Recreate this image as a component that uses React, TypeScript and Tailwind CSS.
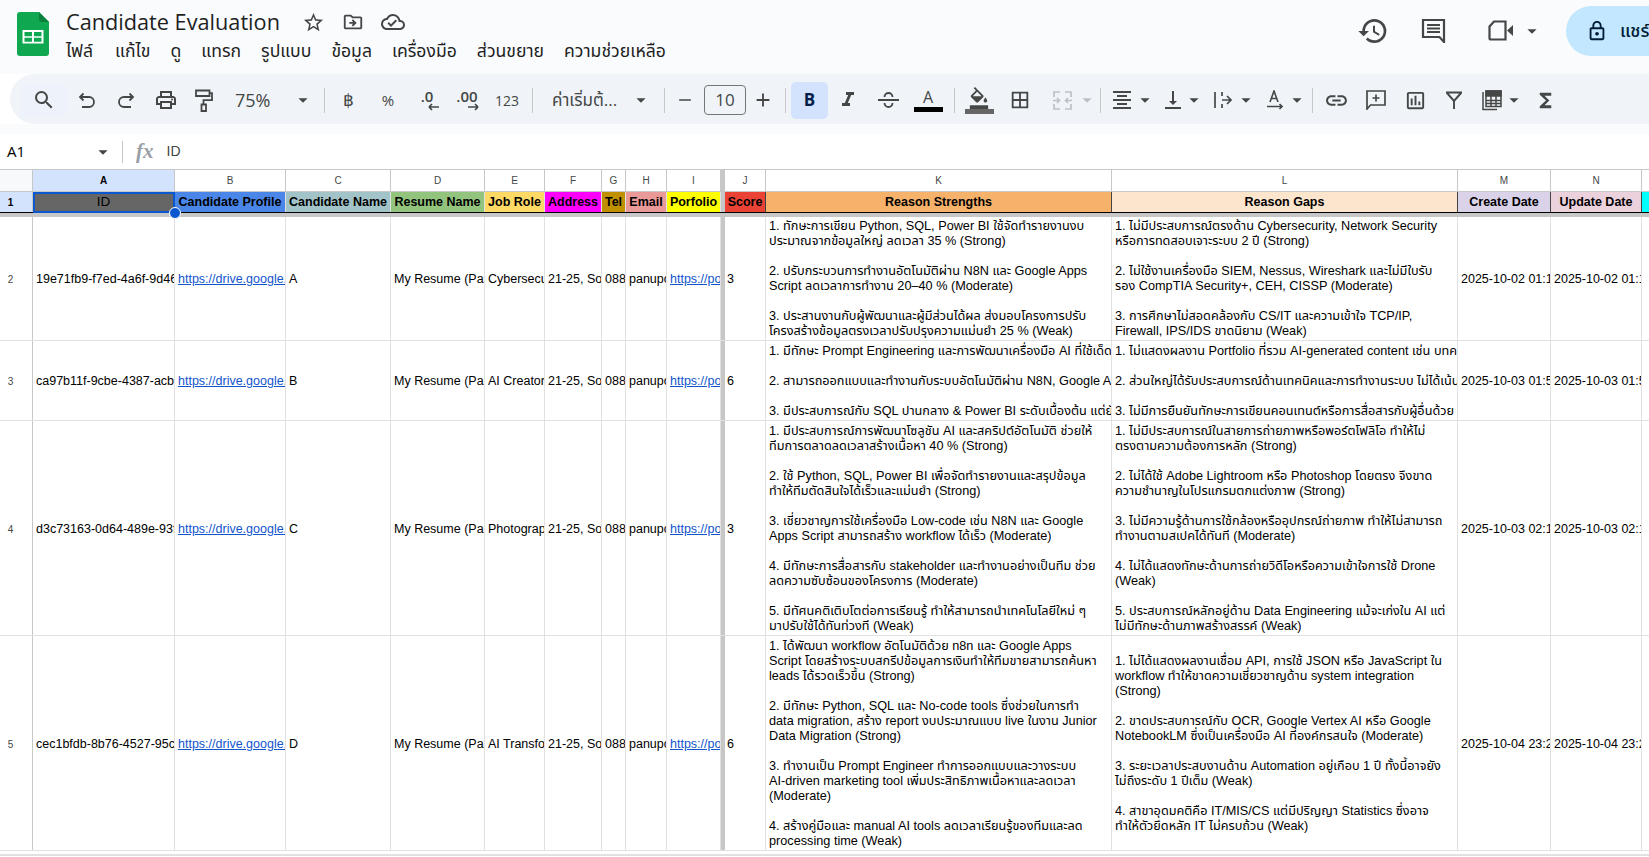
import React from "react";
import {
  MdSearch, MdOutlinePrint, MdArrowDropDown, MdRemove, MdAdd,
  MdFormatItalic, MdOutlineFormatColorFill, MdBorderAll, MdFormatAlignCenter,
  MdVerticalAlignBottom, MdLink, MdOutlineInsertChart,
  MdFunctions, MdStarBorder, MdOutlineDriveFileMove, MdOutlineCloudDone, MdHistory,
  MdOutlineLock,
} from "react-icons/md";

const font = "font-['Liberation_Sans','Noto_Sans_Thai','Noto_Sans',sans-serif]";
const ic = "text-[#444746]";

function Sep() {
  return <div className="w-px h-[25px] bg-[#c7c7c7] shrink-0" />;
}

function Arrow({ className = "" }: { className?: string }) {
  return <MdArrowDropDown size={22} className={`shrink-0 ${ic} ${className}`} />;
}

function Btn({ w, children, className = "" }: { w: string; children?: React.ReactNode; className?: string }) {
  return <div className={`${w} shrink-0 flex items-center justify-center ${className}`}>{children}</div>;
}

function Logo() {
  return (
    <svg width="32" height="44" viewBox="0 0 32 44" className="shrink-0">
      <path d="M3 0h19l10 10v31a3 3 0 0 1-3 3H3a3 3 0 0 1-3-3V3a3 3 0 0 1 3-3z" fill="#0fa850" />
      <path d="M22 0l10 10h-7a3 3 0 0 1-3-3z" fill="#0b7f3c" />
      <path d="M5.500 18h21v13.500h-21z" fill="#fff" />
      <path d="M7.500 20h7.500v4.200H7.500zM17 20h7.500v4.200H17zM7.500 25.700h7.500v4H7.500zM17 25.700h7.500v4H17z" fill="#0fa850" />
    </svg>
  );
}

function Decimal({ label, dir }: { label: string; dir: "l" | "r" }) {
  return (
    <div className="flex flex-col items-center leading-none text-[#444746]">
      <span className="text-[15px] font-semibold leading-[13px] font-['Open_Sans',sans-serif]">{label}</span>
      <svg width="11" height="8" viewBox="0 0 11 8" className={dir === "l" ? "ml-3" : "ml-3 rotate-180"}>
        <path d="M1 4h10M1 4l3-3M1 4l3 3" stroke="#444746" strokeWidth="1.700" fill="none" />
      </svg>
    </div>
  );
}

function Undo({ flip = false }: { flip?: boolean }) {
  return (
    <svg width="17" height="17" viewBox="0 0 17 17" fill="none" stroke="#444746" strokeWidth="1.800" className={flip ? "-scale-x-100" : ""}>
      <path d="M5.500 1.500L2 5l3.500 3.500M2 5h9a4.500 4.500 0 0 1 0 10H4" />
    </svg>
  );
}

function Paint() {
  return (
    <svg width="18" height="23" viewBox="0 0 18 23" fill="none" stroke="#444746" strokeWidth="1.800">
      <path d="M1 1.500h13.500v5.500H1zM14.500 4.200H17v7H8.500v4" />
      <path d="M6.500 15.500h4.500v6.500H6.500z" />
    </svg>
  );
}

function Strike() {
  return (
    <svg width="21" height="20" viewBox="0 0 21 20" fill="none" stroke="#444746" strokeWidth="1.800">
      <path d="M0 10h21M6.500 7a4 4 0 0 1 8 0M6.500 13a4 4 0 0 0 8 0" />
    </svg>
  );
}

function Merge() {
  return (
    <svg width="21" height="21" viewBox="0 0 21 21" fill="none" stroke="#bdc1c6" strokeWidth="1.700">
      <path d="M8 2H2v5M13 2h6v5M8 19H2v-5M13 19h6v-5M1 10.500h6M5 8l2.500 2.500L5 13M20 10.500h-6M16 8l-2.500 2.500L16 13" />
    </svg>
  );
}

function Wrap() {
  return (
    <svg width="18" height="16" viewBox="0 0 18 16" fill="none" stroke="#444746" strokeWidth="1.700">
      <path d="M1 0v16M8 0v4M8 12v4M8 8h9M13 4l4 4-4 4" />
    </svg>
  );
}

function Rotate() {
  return (
    <svg width="17" height="20" viewBox="0 0 17 20" fill="none" stroke="#444746" strokeWidth="1.600">
      <path d="M4 12L8 1l4 11M5.300 8.500h5.400M1 16.500h15M13.500 14l2.500 2.500-2.500 2.500" />
    </svg>
  );
}

function AddComment() {
  return (
    <svg width="20" height="20" viewBox="0 0 20 20" fill="none" stroke="#444746" strokeWidth="1.700">
      <path d="M1 1h18v14H4.500L1 19zM10 4.500v7M6.500 8h7" />
    </svg>
  );
}

function Filter() {
  return (
    <svg width="18" height="18" viewBox="0 0 18 18" fill="none" stroke="#444746" strokeWidth="1.900">
      <path d="M1 1.500h16M2 2l7 8 7-8M9 10v8" />
    </svg>
  );
}

function Calc() {
  return (
    <svg width="20" height="21" viewBox="0 0 20 21" fill="none" stroke="#444746" strokeWidth="1.500">
      <path d="M1 2v17.500h14" />
      <rect x="4" y="1" width="15" height="15.500" />
      <rect x="4" y="1" width="15" height="5" fill="#444746" />
      <path d="M9 6v10.500M14 6v10.500M4 10.500h15M4 13.500h15" />
    </svg>
  );
}

function Chat() {
  return (
    <svg width="26" height="25" viewBox="0 0 26 25" fill="none" stroke="#444746" strokeWidth="2.200">
      <path d="M2 2h21v22l-4.500-5H2z" />
      <path d="M6 7h13M6 10.500h13M6 14h13" strokeWidth="1.800" />
    </svg>
  );
}

function Video() {
  return (
    <svg width="26" height="21" viewBox="0 0 26 21" fill="none">
      <path d="M6 1.500h11.500v18H3a1.500 1.500 0 0 1-1.500-1.500V6.500z" stroke="#444746" strokeWidth="2.200" />
      <path d="M19 10.500L25 5v11z" fill="#444746" />
    </svg>
  );
}

function Toolbar() {
  return (
    <div className="ml-[10px] h-[50px] bg-[#f0f4f9] rounded-l-[25px] flex items-center pl-[11px] pt-[2px] text-[#444746] overflow-hidden">
      <Btn w="w-[47px]" className="h-[33px] bg-[#eef2fb] rounded-[2px] pr-[2px]"><MdSearch size={24} /></Btn>
      <Btn w="w-[36px]"><Undo /></Btn>
      <Btn w="w-[44px]"><Undo flip /></Btn>
      <Btn w="w-[35px]"><MdOutlinePrint size={24} /></Btn>
      <Btn w="w-[41px]"><Paint /></Btn>
      <div className="w-[94px] shrink-0 flex items-center justify-between pl-[11px] pr-[4px]">
        <span className="text-[18px] font-['Open_Sans',sans-serif]">75%</span>
        <Arrow />
      </div>
      <div className="w-[6px] shrink-0" />
      <Sep />
      <Btn w="w-[46px]"><span className="text-[17px] font-['Open_Sans',sans-serif]">฿</span></Btn>
      <Btn w="w-[34px]"><span className="text-[15px] font-['Open_Sans',sans-serif]">%</span></Btn>
      <Btn w="w-[44px]"><Decimal label=".0" dir="l" /></Btn>
      <Btn w="w-[36px]"><Decimal label=".00" dir="r" /></Btn>
      <Btn w="w-[44px]"><span className="text-[14px] font-['Open_Sans',sans-serif]">123</span></Btn>
      <div className="w-[3px] shrink-0" />
      <Sep />
      <div className="w-[131px] shrink-0 flex items-center pl-[19px]">
        <span className="text-[17px] w-[78px] whitespace-nowrap font-['Open_Sans','Noto_Sans_Thai',sans-serif]">ค่าเริ่มต้...</span>
        <Arrow />
      </div>
      <Sep />
      <Btn w="w-[39px]"><MdRemove size={20} /></Btn>
      <div className="w-[42px] h-[30px] border border-[#747775] rounded-[4px] flex items-center justify-center text-[17px] shrink-0 font-['Open_Sans',sans-serif]">10</div>
      <Btn w="w-[34px]"><MdAdd size={22} /></Btn>
      <div className="w-[5px] shrink-0" />
      <Sep />
      <div className="w-[5px] shrink-0" />
      <div className="w-[37px] h-[37px] shrink-0 rounded-[5px] bg-[#d3e3fd] flex items-center justify-center text-[#041e49] font-bold text-[17px] font-['Open_Sans',sans-serif]">B</div>
      <Btn w="w-[40px]"><MdFormatItalic size={24} /></Btn>
      <Btn w="w-[40px]"><Strike /></Btn>
      <Btn w="w-[40px]">
        <div className="flex flex-col items-center w-[29px]">
          <span className="text-[16px] leading-[18px] font-['Open_Sans',sans-serif]">A</span>
          <div className="h-[5px] w-[29px] bg-black mt-[1px]" />
        </div>
      </Btn>
      <div className="w-[6px] shrink-0" />
      <Sep />
      <Btn w="w-[48px]">
        <div className="flex flex-col items-center w-[29px]">
          <MdOutlineFormatColorFill size={22} />
          <div className="h-[5px] w-[29px] bg-[#666666]" />
        </div>
      </Btn>
      <Btn w="w-[34px]"><MdBorderAll size={22} /></Btn>
      <Btn w="w-[50px]"><Merge /></Btn>
      <MdArrowDropDown size={22} className="shrink-0 text-[#bdc1c6] ml-[-11px]" />
      <div className="w-[2px] shrink-0" />
      <Sep />
      <Btn w="w-[26px]" className="ml-[8px]"><MdFormatAlignCenter size={24} /></Btn>
      <Arrow className="ml-[-1px]" />
      <Btn w="w-[26px]" className="ml-[4px]"><MdVerticalAlignBottom size={24} /></Btn>
      <Arrow className="ml-[-3px]" />
      <Btn w="w-[26px]" className="ml-[5px]"><Wrap /></Btn>
      <Arrow className="ml-[-1px]" />
      <Btn w="w-[26px]" className="ml-[4px]"><Rotate /></Btn>
      <Arrow className="ml-[-1px]" />
      <div className="w-[4px] shrink-0" />
      <Sep />
      <Btn w="w-[46px]"><MdLink size={25} /></Btn>
      <Btn w="w-[34px]"><AddComment /></Btn>
      <Btn w="w-[44px]"><MdOutlineInsertChart size={23} /></Btn>
      <Btn w="w-[34px]"><Filter /></Btn>
      <Btn w="w-[42px]"><Calc /></Btn>
      <Arrow className="ml-[-10px]" />
      <Btn w="w-[40px]"><MdFunctions size={23} /></Btn>
    </div>
  );
}

const cols = [
  { l: "A", w: 142, h: "ID", c: "bg-[#666666]" },
  { l: "B", w: 111, h: "Candidate Profile", c: "bg-[#4a86e8]" },
  { l: "C", w: 105, h: "Candidate Name", c: "bg-[#a2c4c9]" },
  { l: "D", w: 94, h: "Resume Name", c: "bg-[#93c47d]" },
  { l: "E", w: 60, h: "Job Role", c: "bg-[#ffd966]" },
  { l: "F", w: 57, h: "Address", c: "bg-[#ff00ff]" },
  { l: "G", w: 24, h: "Tel", c: "bg-[#bf9000]" },
  { l: "H", w: 41, h: "Email", c: "bg-[#ea9999]" },
  { l: "I", w: 54, h: "Porfolio", c: "bg-[#ffff00]" },
  { l: "J", w: 41, h: "Score", c: "bg-[#ea4335]" },
  { l: "K", w: 346, h: "Reason Strengths", c: "bg-[#f6b26b]" },
  { l: "L", w: 346, h: "Reason Gaps", c: "bg-[#fce5cd]" },
  { l: "M", w: 93, h: "Create Date", c: "bg-[#d9d2e9]" },
  { l: "N", w: 91, h: "Update Date", c: "bg-[#ead1dc]" },
  { l: "O", w: 90, h: "Status", c: "bg-[#00ffff]" },
];

const rows = [
  {
    n: "2", hc: "h-[124px]", kp: "pt-0", id: "19e71fb9-f7ed-4a6f-9d46-7b1c", name: "A", role: "Cybersecurity Analyst", score: "3",
    k: "1. ทักษะการเขียน Python, SQL, Power BI ใช้จัดทำรายงานงบ\nประมาณจากข้อมูลใหญ่ ลดเวลา 35 % (Strong)\n\n2. ปรับกระบวนการทำงานอัตโนมัติผ่าน N8N และ Google Apps\nScript ลดเวลาการทำงาน 20–40 % (Moderate)\n\n3. ประสานงานกับผู้พัฒนาและผู้มีส่วนได้ผล ส่งมอบโครงการปรับ\nโครงสร้างข้อมูลตรงเวลาปรับปรุงความแม่นยำ 25 % (Weak)",
    g: "1. ไม่มีประสบการณ์ตรงด้าน Cybersecurity, Network Security\nหรือการทดสอบเจาะระบบ 2 ปี (Strong)\n\n2. ไม่ใช้งานเครื่องมือ SIEM, Nessus, Wireshark และไม่มีใบรับ\nรอง CompTIA Security+, CEH, CISSP (Moderate)\n\n3. การศึกษาไม่สอดคล้องกับ CS/IT และความเข้าใจ TCP/IP,\nFirewall, IPS/IDS ขาดนิยาม (Weak)",
    d: "2025-10-02 01:17:22",
  },
  {
    n: "3", hc: "h-[80px]", kp: "pt-[2px]", id: "ca97b11f-9cbe-4387-acb3-21fe", name: "B", role: "AI Creator", score: "6",
    k: "1. มีทักษะ Prompt Engineering และการพัฒนาเครื่องมือ AI ที่ใช้เด็ดขาด\n\n2. สามารถออกแบบและทำงานกับระบบอัตโนมัติผ่าน N8N, Google Apps\n\n3. มีประสบการณ์กับ SQL ปานกลาง & Power BI ระดับเบื้องต้น แต่ยังขาด",
    g: "1. ไม่แสดงผลงาน Portfolio ที่รวม AI-generated content เช่น บทความ\n\n2. ส่วนใหญ่ได้รับประสบการณ์ด้านเทคนิคและการทำงานระบบ ไม่ได้เน้น\n\n3. ไม่มีการยืนยันทักษะการเขียนคอนเทนต์หรือการสื่อสารกับผู้อื่นด้วย",
    d: "2025-10-03 01:58:09",
  },
  {
    n: "4", hc: "h-[215px]", kp: "pt-[2px]", id: "d3c73163-0d64-489e-93f1-82ac", name: "C", role: "Photographer", score: "3",
    k: "1. มีประสบการณ์การพัฒนาโซลูชัน AI และสคริปต์อัตโนมัติ ช่วยให้\nทีมการตลาดลดเวลาสร้างเนื้อหา 40 % (Strong)\n\n2. ใช้ Python, SQL, Power BI เพื่อจัดทำรายงานและสรุปข้อมูล\nทำให้ทีมตัดสินใจได้เร็วและแม่นยำ (Strong)\n\n3. เชี่ยวชาญการใช้เครื่องมือ Low-code เช่น N8N และ Google\nApps Script สามารถสร้าง workflow ได้เร็ว (Moderate)\n\n4. มีทักษะการสื่อสารกับ stakeholder และทำงานอย่างเป็นทีม ช่วย\nลดความซับซ้อนของโครงการ (Moderate)\n\n5. มีทัศนคติเติบโตต่อการเรียนรู้ ทำให้สามารถนำเทคโนโลยีใหม่ ๆ\nมาปรับใช้ได้ทันท่วงที (Weak)",
    g: "1. ไม่มีประสบการณ์ในสายการถ่ายภาพหรือพอร์ตโฟลิโอ ทำให้ไม่\nตรงตามความต้องการหลัก (Strong)\n\n2. ไม่ได้ใช้ Adobe Lightroom หรือ Photoshop โดยตรง จึงขาด\nความชำนาญในโปรแกรมตกแต่งภาพ (Strong)\n\n3. ไม่มีความรู้ด้านการใช้กล้องหรืออุปกรณ์ถ่ายภาพ ทำให้ไม่สามารถ\nทำงานตามสเปคได้ทันที (Moderate)\n\n4. ไม่ได้แสดงทักษะด้านการถ่ายวิดีโอหรือความเข้าใจการใช้ Drone\n(Weak)\n\n5. ประสบการณ์หลักอยู่ด้าน Data Engineering แม้จะเก่งใน AI แต่\nไม่มีทักษะด้านภาพสร้างสรรค์ (Weak)",
    d: "2025-10-03 02:11:40",
  },
  {
    n: "5", hc: "h-[215px]", kp: "pt-[2px]", id: "cec1bfdb-8b76-4527-95c4-11d0", name: "D", role: "AI Transformation", score: "6",
    k: "1. ได้พัฒนา workflow อัตโนมัติด้วย n8n และ Google Apps\nScript โดยสร้างระบบสกรีปข้อมูลการเงินทำให้ทีมขายสามารถค้นหา\nleads ได้รวดเร็วขึ้น (Strong)\n\n2. มีทักษะ Python, SQL และ No-code tools ซึ่งช่วยในการทำ\ndata migration, สร้าง report งบประมาณแบบ live ในงาน Junior\nData Migration (Strong)\n\n3. ทำงานเป็น Prompt Engineer ทำการออกแบบและวางระบบ\nAI-driven marketing tool เพิ่มประสิทธิภาพเนื้อหาและลดเวลา\n(Moderate)\n\n4. สร้างคู่มือและ manual AI tools ลดเวลาเรียนรู้ของทีมและลด\nprocessing time (Weak)",
    g: "1. ไม่ได้แสดงผลงานเชื่อม API, การใช้ JSON หรือ JavaScript ใน\nworkflow ทำให้ขาดความเชี่ยวชาญด้าน system integration\n(Strong)\n\n2. ขาดประสบการณ์กับ OCR, Google Vertex AI หรือ Google\nNotebookLM ซึ่งเป็นเครื่องมือ AI ที่องค์กรสนใจ (Moderate)\n\n3. ระยะเวลาประสบงานด้าน Automation อยู่เกือบ 1 ปี ทั้งนี้อาจยัง\nไม่ถึงระดับ 1 ปีเต็ม (Weak)\n\n4. สาขาอุดมคติคือ IT/MIS/CS แต่มีปริญญา Statistics ซึ่งอาจ\nทำให้ตัวยึดหลัก IT ไม่ครบถ้วน (Weak)",
    d: "2025-10-04 23:25:31",
  },
];

const cell = "shrink-0 border-r border-[#e1e1e1] overflow-hidden whitespace-pre flex items-center px-[3px] leading-[15px] text-black";

function Row({ r }: { r: (typeof rows)[number] }) {
  const simple: React.ReactNode[] = [
    r.id,
    <span className="text-[#1155cc] underline">https://drive.google.com/file/d/1a</span>,
    r.name,
    "My Resume (Panupong).pdf",
    r.role,
    "21-25, Soi Sukhumvit",
    "0881234567",
    "panupong@example.com",
    <span className="text-[#1155cc] underline">https://portfolio.example.com</span>,
  ];
  return (
    <div className={`flex ${r.hc} border-b border-[#e1e1e1] box-border`}>
      <div className="w-[33px] shrink-0 border-r border-[#c7c7c7] flex items-center justify-center pr-[11px] pt-[2px] text-[10px] text-[#444746]">{r.n}</div>
      {simple.map((t, i) => (
        <div key={i} className={`${cell} text-[12.5px] pt-[2px]`} style={{ width: cols[i].w }}>{t}</div>
      ))}
      <div className="w-[4px] shrink-0 bg-[#c7c7c7]" />
      <div className={`${cell} text-[12.5px] w-[41px] pt-[2px] !pl-[2px]`}>{r.score}</div>
      <div className={`${cell} text-[12.700px] w-[346px] ${r.kp}`}>{r.k}</div>
      <div className={`${cell} text-[12.700px] w-[346px] ${r.kp}`}>{r.g}</div>
      <div className={`${cell} text-[12.5px] w-[93px] pt-[2px]`}>{r.d}</div>
      <div className={`${cell} text-[12.5px] w-[91px] pt-[2px]`}>{r.d}</div>
      <div className={`${cell} text-[12.5px] w-[90px]`} />
    </div>
  );
}

export default function App() {
  return (
    <div className={`w-[1649px] h-[857px] overflow-hidden bg-white flex flex-col ${font}`}>
      <div className="h-[74px] shrink-0 bg-[#f9fbfd] flex items-start overflow-hidden">
        <div className="ml-[17px] mt-[12px]"><Logo /></div>
        <div className="ml-[17px] mt-[7px] w-[1291px] shrink-0">
          <div className="flex items-center h-[30px]">
            <span className="text-[21.700px] text-[#1f1f1f] font-['Open_Sans',sans-serif] leading-[30px] w-[236px] whitespace-nowrap">Candidate Evaluation</span>
            <MdStarBorder size={23} className={ic} />
            <MdOutlineDriveFileMove size={22} className={`${ic} ml-[17px]`} />
            <MdOutlineCloudDone size={24} className={`${ic} ml-[17px]`} />
          </div>
          <div className="flex gap-[20px] text-[17.600px] text-[#1f1f1f] leading-[26px] font-['Open_Sans','Noto_Sans_Thai',sans-serif]">
            {["ไฟล์", "แก้ไข", "ดู", "แทรก", "รูปแบบ", "ข้อมูล", "เครื่องมือ", "ส่วนขยาย", "ความช่วยเหลือ"].map((m, i) => (
              <span key={m} className={i === 0 ? "mr-[2px]" : ""}>{m}</span>
            ))}
          </div>
        </div>
        <div className="flex items-center h-[61px] text-[#444746] shrink-0">
          <MdHistory size={32} />
          <div className="ml-[32px]"><Chat /></div>
          <div className="ml-[41px]"><Video /></div>
          <Arrow className="ml-[7px]" />
          <div className="ml-[23px] w-[120px] h-[50px] rounded-l-[25px] bg-[#c2e7ff] flex items-center pl-[20px] gap-[12px] text-[#001d35] shrink-0">
            <MdOutlineLock size={22} />
            <span className="text-[18px] font-medium whitespace-nowrap font-['Open_Sans','Noto_Sans_Thai',sans-serif]">แชร์</span>
          </div>
        </div>
      </div>
      <Toolbar />
      <div className="h-[10px] shrink-0 bg-[#f9fbfd]" />
      <div className="h-[36px] shrink-0 border-b border-[#c7c7c7] flex items-center bg-white">
        <span className="text-[15px] text-black w-[92px] pl-[7px] font-['Open_Sans',sans-serif]">A1</span>
        <Arrow />
        <div className="w-px h-[22px] bg-[#c7c7c7] ml-[8px]" />
        <span className="ml-[13px] text-[#9aa0a6] italic font-bold text-[21px] font-['Liberation_Serif',serif]">fx</span>
        <span className="ml-[13px] text-[14px] text-[#444746]">ID</span>
      </div>
      <div className="relative flex-1 overflow-hidden">
        <div className="flex h-[22px] border-b border-[#c7c7c7] box-border">
          <div className="w-[33px] shrink-0 bg-[#f8f9fa] border-r border-[#c7c7c7]" />
          {cols.slice(0, 9).map((c) => (
            <div key={c.l} style={{ width: c.w }} className={`shrink-0 border-r border-[#c7c7c7] flex items-center justify-center text-[10px] text-[#444746] ${c.l === "A" ? "bg-[#d3e3fd] font-bold text-black" : ""}`}>{c.l}</div>
          ))}
          <div className="w-[4px] shrink-0 bg-[#c7c7c7]" />
          {cols.slice(9).map((c) => (
            <div key={c.l} style={{ width: c.w }} className="shrink-0 border-r border-[#c7c7c7] flex items-center justify-center text-[10px] text-[#444746]">{c.l}</div>
          ))}
        </div>
        <div className="flex h-[21px] border-b border-black box-border">
          <div className="w-[33px] shrink-0 bg-[#d3e3fd] border-r border-[#c7c7c7] flex items-center justify-center pr-[11px] text-[10px] font-bold text-black">1</div>
          {cols.slice(0, 9).map((c) => (
            <div key={c.l} style={{ width: c.w }} className={`shrink-0 ${c.c} border-r border-[#e1e1e1] flex items-center justify-center pt-[1px] overflow-hidden whitespace-pre ${c.l === "A" ? "text-[13.500px]" : "text-[12.5px] font-bold"}`}>{c.h}</div>
          ))}
          <div className="w-[4px] shrink-0 bg-[#c7c7c7]" />
          {cols.slice(9).map((c) => (
            <div key={c.l} style={{ width: c.w }} className={`shrink-0 ${c.c} border-r border-[#444] flex items-center justify-center pt-[1px] overflow-hidden whitespace-pre text-[12.5px] font-bold`}>{c.h}</div>
          ))}
        </div>
        <div className="h-[4px] bg-[#c7c7c7]" />
        {rows.map((r) => <Row key={r.n} r={r} />)}
        <div className="h-[5px] border-b-2 border-[#e1e1e1]" />
        <div className="absolute left-[33px] top-[22px] w-[142px] h-[21px] border-2 border-[#0b57d0] pointer-events-none" />
        <div className="absolute left-[169px] top-[37px] w-[12px] h-[12px] rounded-full bg-[#0b57d0] border border-white" />
      </div>
    </div>
  );
}
